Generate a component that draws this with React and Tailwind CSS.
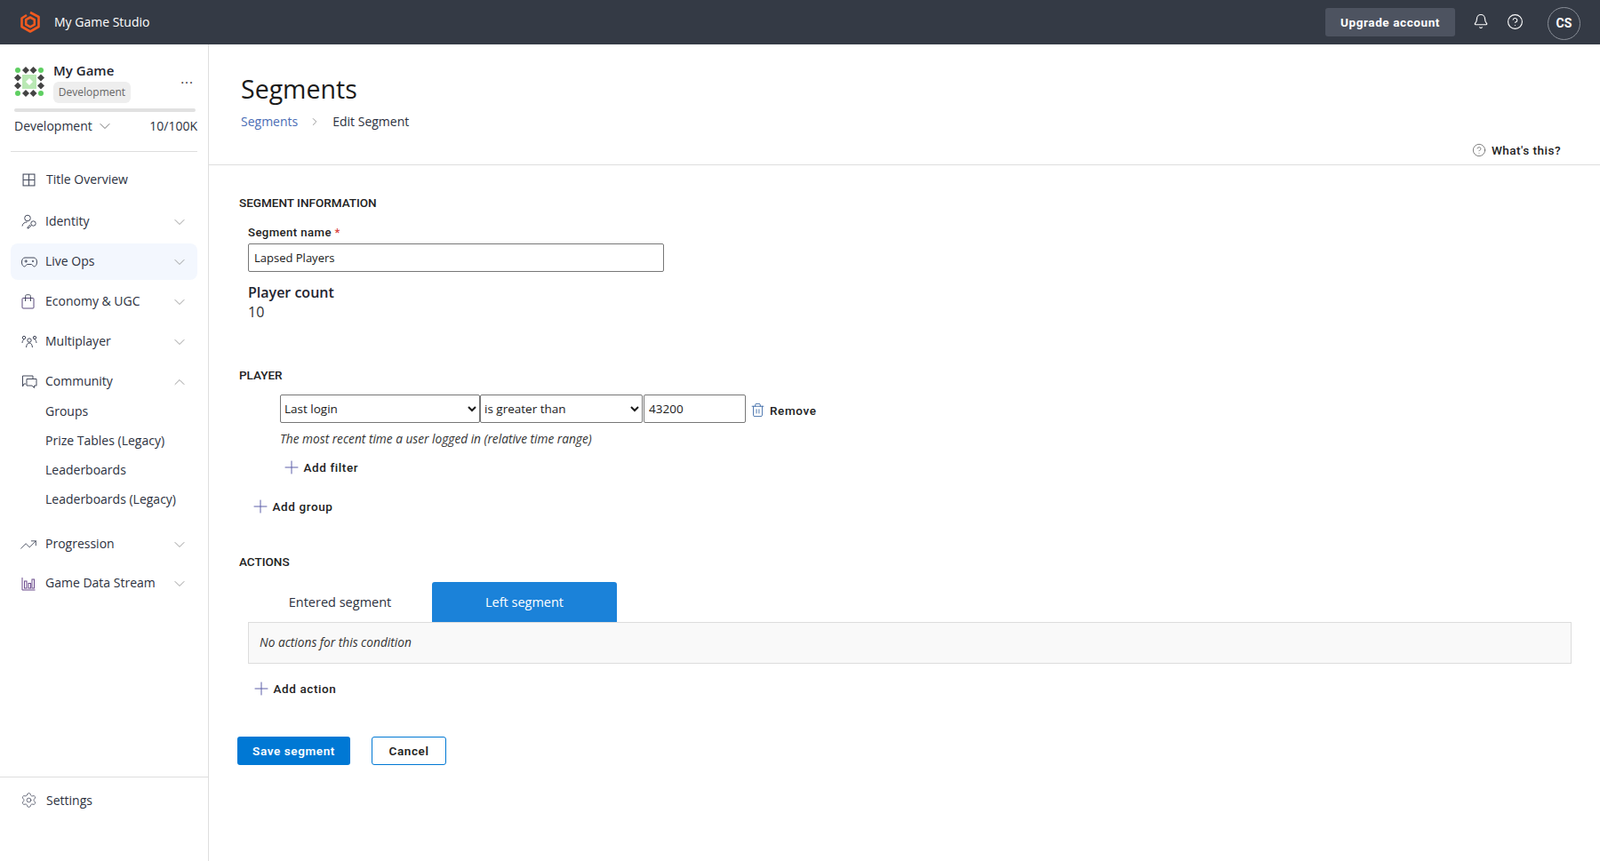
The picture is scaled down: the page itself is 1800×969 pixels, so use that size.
import React from 'react';
import { Bell, ChevronDown, ChevronRight, ChevronUp, CircleHelp, Plus, Settings, Trash2, TrendingUp } from 'lucide-react';

const din = "font-['Roboto',sans-serif]";

const Logo = () => (
  <svg width="24" height="26" viewBox="0 0 24 26" fill="none" stroke="#f15a1f" strokeWidth="2.6" strokeLinejoin="round">
    <path d="M12 2 L21.5 7 V18 L12 23.5 L2.5 18 V8.5 L8 5" />
    <path d="M12 7.5 L16.8 10.2 V15.6 L12 18.3 L7.2 15.6 V10.2 Z" />
  </svg>
);

const GameIcon = () => {
  const diamonds = [[13, 4], [21.5, 4], [4, 12.5], [4, 21.5], [30, 12.5], [30, 21.5], [13, 30], [21.5, 30]];
  const dots = [[4, 4], [30, 4], [4, 30], [30, 30]];
  return (
    <svg width="34" height="34" viewBox="0 0 34 34">
      <rect x="9" y="9" width="16" height="16" fill="#b9e8b4" />
      <path d="M17 13 L21 17 L17 21 L13 17 Z" fill="#fff" />
      {diamonds.map(([x, y]) => (
        <path key={`${x}-${y}`} d={`M${x} ${y - 4} L${x + 4} ${y} L${x} ${y + 4} L${x - 4} ${y} Z`} fill="#444" />
      ))}
      {dots.map(([x, y]) => (
        <circle key={`${x}-${y}`} cx={x} cy={y} r="3" fill="#5fcf62" />
      ))}
    </svg>
  );
};

const GridIcon = () => (
  <svg width="15" height="15" viewBox="0 0 14 14" fill="none" stroke="#444a5c" strokeWidth="1" className="ml-px">
    <rect x="1" y="1" width="12" height="12" />
    <path d="M7 1 V13 M1 7 H13" />
  </svg>
);

const IdentityIcon = () => (
  <svg width="18" height="18" viewBox="0 0 18 18" fill="none" stroke="#444a5c" strokeWidth="1">
    <circle cx="7" cy="4.5" r="3.3" />
    <path d="M1 13.5 C1.5 10.5 3.5 9 6.5 9" />
    <circle cx="13.5" cy="10.5" r="2.7" />
    <path d="M11.5 12.5 L8 16 H7 V15 L10 12" />
  </svg>
);

const PadIcon = () => (
  <svg width="18" height="12" viewBox="0 0 18 12" fill="none" stroke="#444a5c" strokeWidth="1">
    <path d="M4 1 H14 C16 1 17.5 3 17.5 6 C17.5 9 16 11 14.5 11 C13 11 12.5 8.5 11.5 8.5 H6.5 C5.5 8.5 5 11 3.5 11 C2 11 0.5 9 0.5 6 C0.5 3 2 1 4 1 Z" />
    <path d="M3.5 5 H7 M5.2 3.3 V6.7" />
    <circle cx="13" cy="5" r="0.7" />
  </svg>
);

const BagIcon = () => (
  <svg width="15" height="17" viewBox="0 0 15 17" fill="none" stroke="#5a4a7c" strokeWidth="1">
    <rect x="1" y="4.5" width="13" height="11.5" rx="1" />
    <path d="M4.5 8 V2.5 C4.5 1.2 5.5 0.7 6.5 0.7 H8.5 C9.5 0.7 10.5 1.2 10.5 2.5 V8" stroke="#444a5c" />
  </svg>
);

const PlayersIcon = () => (
  <svg width="18" height="16" viewBox="0 0 18 16" fill="none" stroke="#444a5c" strokeWidth="1">
    <circle cx="9" cy="6" r="2.2" />
    <path d="M5.5 14 C6 10.5 7 9 9 9 C11 9 12 10.5 12.5 14" />
    <circle cx="3" cy="3" r="1.7" />
    <circle cx="15" cy="3" r="1.7" />
    <path d="M1 9 C1.2 6.8 2 5.5 3 5.5 M17 9 C16.8 6.8 16 5.5 15 5.5" />
  </svg>
);

const ChatIcon = () => (
  <svg width="18" height="16" viewBox="0 0 18 16" fill="none" stroke="#444a5c" strokeWidth="1">
    <path d="M5 10 H3 L1.5 13 V1 H13 V4" />
    <path d="M6 4.5 H17 V12 H14.5 V14.5 L12 12 H6 Z" />
  </svg>
);

const BarsIcon = () => (
  <svg width="16" height="16" viewBox="0 0 16 16" fill="none" stroke="#6b4a8c" strokeWidth="1">
    <path d="M1 1 V15 H15.5" />
    <rect x="3.5" y="5" width="2.5" height="8" />
    <rect x="8" y="7.5" width="2.5" height="5.5" />
    <rect x="12" y="3" width="2.5" height="10" />
  </svg>
);

const NavRow = ({ icon, label, open, active, noArrow, className }) => (
  <div className={`flex h-[41px] items-center rounded-lg pl-[12px] pr-[10px] ${active ? 'bg-[#f3f7fe]' : ''} ${className || ''}`}>
    <span className="flex w-[27px] shrink-0 items-center">{icon}</span>
    <span className={`flex-1 text-[14px] leading-none text-[#2c3140] -mt-0.5 ${noArrow ? 'ml-px' : ''}`}>{label}</span>
    {noArrow ? null : open ? <ChevronUp size={20} strokeWidth={1} color="#888" /> : <ChevronDown size={20} strokeWidth={1} color="#888" />}
  </div>
);

const AddLink = ({ label, className }) => (
  <div className={`flex items-center ${className || ''}`}>
    <Plus size={24} strokeWidth={1} color="#5d5fa8" className="-ml-[3px]" />
    <span className={`${din} ml-[1.5px] text-[13.5px] font-medium tracking-[0.6px] text-[#222]`}>{label}</span>
  </div>
);

const SectionTitle = ({ children, className }) => (
  <h2 className={`${din} text-[13.5px] font-medium leading-[16px] text-[#222] ${className || ''}`}>{children}</h2>
);

export default function App() {
  return (
    <div className="flex h-screen flex-col overflow-hidden bg-white font-['Open_Sans',sans-serif]">
      {/* Top bar */}
      <header className="flex h-[50px] shrink-0 items-center bg-[#343a45] text-white">
        <div className="ml-[22px]"><Logo /></div>
        <span className="ml-[15px] -mt-0.5 text-[14px] font-medium">My Game Studio</span>
        <div className="ml-auto flex items-center">
          <button className={`${din} h-[32px] w-[146px] rounded-[3px] bg-[#4d5360] text-[13.5px] font-bold tracking-[0.6px]`}>Upgrade account</button>
          <Bell size={18} strokeWidth={1.5} className="ml-[20px] -mt-0.5" />
          <CircleHelp size={19} strokeWidth={1.4} className="ml-[20px] -mt-0.5" />
          <div className={`${din} ml-[27px] mr-[22px] mt-[2px] flex h-[37px] w-[37px] items-center justify-center rounded-full border border-[#8a8f98] text-[14px] font-bold`}>CS</div>
        </div>
      </header>

      <div className="flex min-h-0 flex-1">
        {/* Sidebar */}
        <aside className="flex w-[235px] shrink-0 flex-col border-r border-[#dedede]">
          <div className="mx-3 h-[121px] shrink-0 border-b border-[#dedede]">
            <div className="flex h-[72px] items-start pl-1 pt-[21px]">
              <div className="mt-[4px]"><GameIcon /></div>
              <div className="ml-[10px]">
                <div className="-mt-[2px] text-[15px] font-semibold leading-[20px] text-[#1f2430]">My Game</div>
                <div className="mt-[3px] flex h-[24px] w-[87px] items-center justify-center rounded-md bg-[#eeeeee] text-[12px] text-[#666]">Development</div>
              </div>
              <span className="ml-auto mr-[4px] mt-[10px] text-[15px] leading-none tracking-[1px] text-[#333]">...</span>
            </div>
            <div className="mx-1 h-1 w-[204px] rounded-full bg-[#e1e1e1]" />
            <div className="mt-[5px] flex items-center pl-1 text-[14px] text-[#2c3140]">
              <span className="font-medium">Development</span>
              <ChevronDown size={20} strokeWidth={1} color="#555" className="ml-[4px]" />
              <span className="ml-auto">10/100K</span>
            </div>
          </div>

          <nav className="mx-3 flex flex-col pb-[9px] pt-[11px]">
            <NavRow icon={<GridIcon />} label="Title Overview" noArrow />
            <NavRow icon={<IdentityIcon />} label="Identity" className="mt-[6px]" />
            <NavRow icon={<PadIcon />} label="Live Ops" active className="mt-[4px]" />
            <NavRow icon={<BagIcon />} label="Economy & UGC" className="mt-[4px]" />
            <NavRow icon={<PlayersIcon />} label="Multiplayer" className="mt-[4px]" />
            <NavRow icon={<ChatIcon />} label="Community" open className="mt-[4px]" />
            <div className="-mt-1 pl-[39px] text-[14px] text-[#2c3140]">
              {['Groups', 'Prize Tables (Legacy)', 'Leaderboards', 'Leaderboards (Legacy)'].map(item => (
                <div key={item} className="flex h-[33px] items-center">{item}</div>
              ))}
            </div>
            <NavRow icon={<TrendingUp size={20} strokeWidth={1.1} color="#444a5c" className="-ml-[2px]" />} label="Progression" className="mt-[14px]" />
            <NavRow icon={<BarsIcon />} label="Game Data Stream" className="mt-[3px]" />
          </nav>

          <div className="mb-[44px] mt-auto flex h-[51px] items-center border-t border-[#dedede] pl-[23px] text-[14px] text-[#2c3140]">
            <Settings size={19} strokeWidth={1} color="#444a5c" />
            <span className="ml-[10px]">Settings</span>
          </div>
        </aside>

        {/* Main */}
        <main className="min-w-0 flex-1">
          <div className="relative h-[136px] border-b border-[#dedede] pl-[36px]">
            <h1 className="pt-[26px] text-[28.5px] font-normal leading-[48px] text-[#1a1a1a]">Segments</h1>
            <div className="mt-[3px] flex items-center text-[14px] leading-[20px]">
              <span className="text-[#4a6db5]">Segments</span>
              <ChevronRight size={14} strokeWidth={1} color="#555" className="ml-[12px]" />
              <span className="ml-[13px] text-[#2c3140]">Edit Segment</span>
            </div>
            <div className="absolute right-[44px] top-[109px] flex items-center">
              <CircleHelp size={16} strokeWidth={1} color="#444" />
              <span className={`${din} ml-[6px] text-[13.5px] font-medium tracking-[0.5px] text-[#222]`}>What's this?</span>
            </div>
          </div>

          <div className="pl-[34px] pr-[32px] pt-[34px]">
            <SectionTitle>SEGMENT INFORMATION</SectionTitle>
            <div className="pl-[10px]">
              <label className={`${din} mt-[18px] block text-[13.2px] font-medium leading-[16px] tracking-[0.4px] text-[#222]`}>
                Segment name <span className="align-top text-[#d9423d]">*</span>
              </label>
              <input readOnly value="Lapsed Players" className="mt-[4px] block h-[32px] w-[468px] rounded-[2px] border border-[#777] px-[6px] text-[13px] text-[#1a1a1a]" />
              <div className="mt-[13px] text-[16px] font-semibold leading-[20px] text-[#1f2430]">Player count</div>
              <div className="mt-[1px] text-[16px] leading-[22px] text-[#333]">10</div>
            </div>

            <SectionTitle className="mt-[52px]">PLAYER</SectionTitle>
            <div className="mt-[14px] flex items-center pl-[46px]">
              <select className="h-[32px] w-[225px] rounded-[2px] border border-[#777] bg-white text-[13.5px] text-[#1a1a1a]">
                <option>Last login</option>
              </select>
              <select className="h-[32px] w-[183px] rounded-[2px] border border-[#777] bg-white text-[13.5px] text-[#1a1a1a]">
                <option>is greater than</option>
              </select>
              <input readOnly value="43200" className="ml-px h-[32px] w-[115px] rounded-[2px] border border-[#777] px-[5px] text-[13.5px] text-[#1a1a1a]" />
              <Trash2 size={17} strokeWidth={1.3} color="#3f6ca8" className="ml-[5px] mt-[2px]" />
              <span className={`${din} ml-[5px] mt-[4px] text-[13.5px] font-medium tracking-[0.6px] text-[#222]`}>Remove</span>
            </div>
            <p className="mt-[8px] pl-[46px] text-[13.7px] italic leading-[20px] text-[#333]">The most recent time a user logged in (relative time range)</p>
            <AddLink label="Add filter" className="ml-[50px] mt-[10px]" />
            <AddLink label="Add group" className="ml-[15px] mt-[20px]" />

            <SectionTitle className="mt-[42px]">ACTIONS</SectionTitle>
            <div className="mt-[15px] pl-[10px]">
              <div className="flex h-[45px] text-[14.5px]">
                <div className="flex w-[207px] items-center justify-center text-[#2c3140]">Entered segment</div>
                <div className="flex w-[208px] items-center justify-center rounded-t-[3px] bg-[#1b82d9] text-white">Left segment</div>
              </div>
              <div className="flex h-[47px] items-center border border-[#dddddd] bg-[#f9f9f9] pl-3 text-[13.7px] italic text-[#333]">No actions for this condition</div>
              <AddLink label="Add action" className="ml-[6px] mt-[16px]" />
            </div>

            <div className={`${din} -ml-0.5 mt-[42px] flex text-[13.5px] font-semibold tracking-[0.6px]`}>
              <button className="h-[32px] w-[127px] rounded-[3px] bg-[#0078d4] text-white">Save segment</button>
              <button className="ml-[24px] h-[32px] w-[84px] rounded-[3px] border border-[#0078d4] bg-white text-[#222]">Cancel</button>
            </div>
          </div>
        </main>
      </div>
    </div>
  );
}
